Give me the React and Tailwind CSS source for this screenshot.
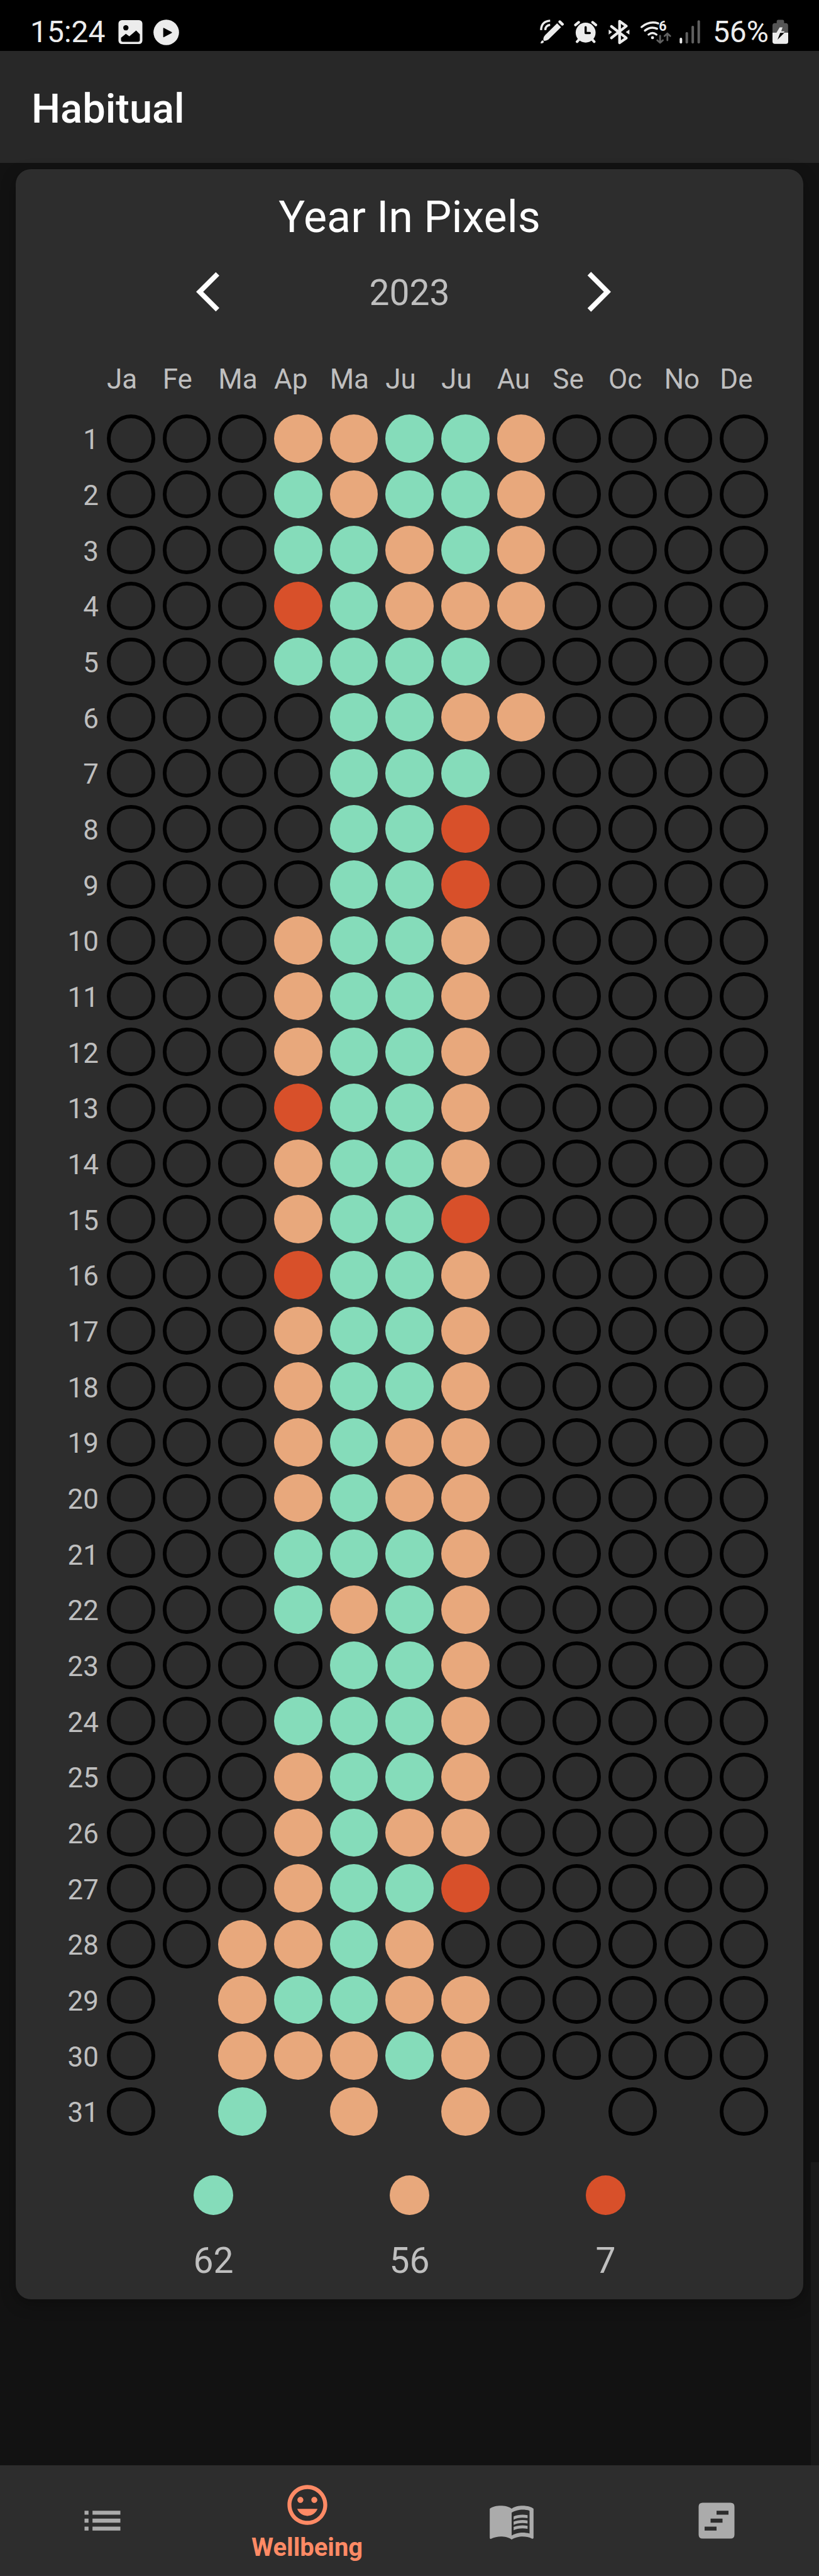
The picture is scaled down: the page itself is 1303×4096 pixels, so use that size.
import React, { useState } from "react";
import { MdMenuBook } from "react-icons/md";

const MONTHS = ["Ja", "Fe", "Ma", "Ap", "Ma", "Ju", "Ju", "Au", "Se", "Oc", "No", "De"];

// One string per day, one character per month:
// g = good, o = okay, r = rough, . = nothing logged, _ = no such date
const DAYS = [
  "...ooggo....",
  "...goggo....",
  "...ggogo....",
  "...rgooo....",
  "...gggg.....",
  "....ggoo....",
  "....ggg.....",
  "....ggr.....",
  "....ggr.....",
  "...oggo.....",
  "...oggo.....",
  "...oggo.....",
  "...rggo.....",
  "...oggo.....",
  "...oggr.....",
  "...rggo.....",
  "...oggo.....",
  "...oggo.....",
  "...ogoo.....",
  "...ogoo.....",
  "...gggo.....",
  "...gogo.....",
  "....ggo.....",
  "...gggo.....",
  "...oggo.....",
  "...ogoo.....",
  "...oggr.....",
  "..oogo......",
  "._oggoo.....",
  "._ooogo.....",
  "._g_o_o._._.",
];

const FILLS = {
  g: "bg-[#85dcba]",
  o: "bg-[#e8a87c]",
  r: "bg-[#d8502a]",
  ".": "border-6 border-black",
};

const TOTALS = [
  { mood: "g", count: 62 },
  { mood: "o", count: 56 },
  { mood: "r", count: 7 },
];

function StatusBar() {
  return (
    <div className="flex h-[81px] items-center justify-between bg-black pt-[21px] pr-[49px] pl-12 text-5xl leading-none text-[#ececec]">
      <div className="flex items-center">
        <span>15:24</span>
        <svg className="ml-5 h-10 w-[39px]" viewBox="208 34 43 44" aria-hidden="true">
          <rect x="208.5" y="35" width="42" height="42" rx="6" fill="#ececec" />
          <circle cx="221.5" cy="48.5" r="4.6" />
          <path d="M213 66l8.5-7 6.100 4.500 11.900-10.200 6.500 6.500v10q0 3.200-3.200 3.200H216.200q-3.200 0-3.200-3.200z" />
        </svg>
        <svg className="ml-[17px] size-[41px]" viewBox="0 0 45 45" aria-hidden="true">
          <circle cx="22.500" cy="22.500" r="22.300" fill="#ececec" />
          <path d="M17.200 15.500q0-1.500 1.300-.8l13.500 7.200q1.200.8 0 1.600l-13.500 7.200q-1.300.7-1.300-.8z" />
        </svg>
      </div>
      <div className="flex items-center">
        <svg className="h-10 w-[38px]" viewBox="950 34 42 44" aria-hidden="true">
          <path d="M956.200 71q-1-5.500 3.300-10l20.700-20.500 6.900 6.900-21.500 21q-4.500 4-9.400 2.600z" fill="#ececec" />
          <path d="M985 37.800l4.500 4.400" stroke="#ececec" strokeWidth="5" strokeLinecap="round" />
          <path d="M951.300 75.800q-.3-3.300 3.300-5.500l2.700 2.700q-2.200 3.300-6 2.800z" fill="#ececec" />
          <path d="M952 52.500q.5-15.500 16-16.500M959.300 52.500q.5-8.500 8.700-9.300" stroke="#ececec" strokeWidth="3.800" fill="none" />
        </svg>
        <svg className="ml-4 h-10 w-[38px]" viewBox="1010 34 42 44" aria-hidden="true">
          <g stroke="#ececec" strokeWidth="4.600" strokeLinecap="round">
            <path d="M1012.800 43.500l5.700-4.800M1048.600 43.500l-5.700-4.800M1020 68l-4.400 4.900M1041.400 68l4.400 4.900" />
          </g>
          <circle cx="1030.700" cy="57" r="17.500" fill="#ececec" />
          <path d="M1030.700 47.500v10.200h7.300" stroke="#000" strokeWidth="3.800" fill="none" strokeLinecap="round" strokeLinejoin="round" />
        </svg>
        <svg className="ml-[17px] h-10 w-[34px]" viewBox="1071 34 38 44" aria-hidden="true">
          <path d="M1076.300 46l26.500 20.500-12 8.500V36.800l12 8.500-26.500 21" stroke="#ececec" strokeWidth="4.800" fill="none" strokeLinecap="round" strokeLinejoin="round" />
          <path d="M1071.500 51.500l6 4.500-6 4.500zM1108.300 51.500l-6.500 4.500 6.500 4.500z" fill="#ececec" />
        </svg>
        <svg className="ml-4 h-[50px] w-[51px]" viewBox="1127 28 56 56" aria-hidden="true">
          <circle cx="1149" cy="66" r="2.700" fill="#ececec" />
          <g stroke="#ececec" strokeWidth="3.800" fill="none" strokeLinecap="round">
            <path d="M1142 60.500q7-5.500 14 0" />
            <path d="M1135.500 53.300q10.500-8.300 21.500-3.300" />
            <path d="M1129.500 47q14-11.500 29.500-6.500" />
          </g>
          <text x="1160.300" y="54" fontSize="24" fontWeight="700" fill="#ececec">6</text>
          <g stroke="#606060" strokeWidth="3.200" fill="none" strokeLinecap="round" strokeLinejoin="round">
            <path d="M1162.500 62.500v12M1157.500 70.500l5 4.500 5-4.500" />
            <path d="M1175.500 70.500v-12M1170.500 63l5-4.500 5 4.500" />
          </g>
        </svg>
        <svg className="ml-3 h-10 w-[33px]" viewBox="1195 34 36 44" aria-hidden="true">
          <rect x="1195.200" y="66" width="4.400" height="10" rx="2" fill="#ececec" />
          <g fill="#606060">
            <rect x="1205.500" y="56" width="4.400" height="20" rx="2" />
            <rect x="1215.900" y="45" width="4.400" height="31" rx="2" />
            <rect x="1226.400" y="35.500" width="4.400" height="40.500" rx="2" />
          </g>
        </svg>
        <span className="ml-5">56%</span>
        <svg className="ml-1.5 h-10 w-[25px]" viewBox="1358 34 28 44" aria-hidden="true">
          <path d="M1365.500 40v-3q0-2.800 2.800-2.800h7.600q2.800 0 2.800 2.800v3h2.800q4.300 0 4.300 4.300V57H1358V44.300q0-4.300 4.300-4.300z" fill="#555" />
          <path d="M1358 57h28v15.700q0 4.300-4.300 4.300h-19.400q-4.300 0-4.300-4.300z" fill="#ececec" />
          <path d="M1370.800 47.500h5.200l-2.500 7h6.200l-2.300 2.800h-12.500z" fill="#ececec" />
          <path d="M1364.500 57.300h7.200l-4.700 12 12-12z" />
        </svg>
      </div>
    </div>
  );
}

function YearCard() {
  const [year, setYear] = useState(2023);
  return (
    <section className="mx-[25px] mt-2.5 rounded-3xl bg-[#2d2d2d] pt-9 pb-[29px] text-[#bfbfbf] shadow-[0_8px_24px_rgba(0,0,0,0.3)]">
      <h2 className="text-center text-[70px] leading-[80px] text-white">Year In Pixels</h2>

      <div className="mx-auto mt-[41px] flex h-[76px] max-w-[680px] items-center justify-between">
        <button type="button" aria-label="Previous year" onClick={() => setYear(year - 1)} className="text-white">
          <svg className="size-[76px]" viewBox="0 0 24 24" fill="currentColor">
            <path d="M11.670 3.870 9.900 2.100 0 12l9.900 9.900 1.770-1.770L3.540 12z" />
          </svg>
        </button>
        <span className="pt-1 text-[57px] leading-[64px]">{year}</span>
        <button type="button" aria-label="Next year" onClick={() => setYear(year + 1)} className="text-white">
          <svg className="size-[76px]" viewBox="0 0 24 24" fill="currentColor">
            <path d="M6.230 20.230 8 22l10-10L8 2 6.230 3.770 14.460 12z" />
          </svg>
        </button>
      </div>

      <table className="mt-[75px] block pr-[50px] text-[44px] leading-[52px]">
        <thead className="block">
          <tr className="mb-6 grid grid-cols-[139px_repeat(12,minmax(0,1fr))]">
            <td />
            {MONTHS.map((m, i) => (
              <th key={i} scope="col" className="pl-1.5 text-left font-normal">
                {m}
              </th>
            ))}
          </tr>
        </thead>
        <tbody className="block">
          {DAYS.map((row, d) => (
            <tr key={d} className="grid grid-cols-[139px_repeat(12,minmax(0,1fr))] items-center">
              <th scope="row" className="pt-1 pr-[7px] text-right font-normal">
                {d + 1}
              </th>
              {row.split("").map((c, m) => (
                <td key={m} className="aspect-square p-1.5">
                  {c !== "_" && <div className={`size-full rounded-full ${FILLS[c]}`} />}
                </td>
              ))}
            </tr>
          ))}
        </tbody>
      </table>

      <ul className="mx-auto mt-[57px] grid max-w-[936px] grid-cols-3">
        {TOTALS.map((t) => (
          <li key={t.mood} className="flex flex-col items-center gap-[41px]">
            <div className={`size-[63px] rounded-full ${FILLS[t.mood]}`} />
            <span className="text-[57px] leading-[64px]">{t.count}</span>
          </li>
        ))}
      </ul>
    </section>
  );
}

function BottomNav() {
  return (
    <nav className="grid h-[176px] grid-cols-4 border-b border-[#352f35] bg-[#2d2d2d] text-[#ababab]">
      <a href="#habits" aria-label="Habits" className="flex items-center justify-center">
        <svg className="size-[76px]" viewBox="0 0 24 24" fill="currentColor">
          <path d="M3 13h2v-2H3v2zm0 4h2v-2H3v2zm0-8h2V7H3v2zm4 4h14v-2H7v2zm0 4h14v-2H7v2zM7 7v2h14V7H7z" />
        </svg>
      </a>
      <a href="#wellbeing" aria-current="page" className="flex flex-col items-center pt-[25px] text-[#ff8a65]">
        <svg className="size-[76px]" viewBox="0 0 24 24" fill="currentColor">
          <path d="M11.990 2C6.470 2 2 6.480 2 12s4.470 10 9.990 10C17.520 22 22 17.520 22 12S17.520 2 11.990 2zM12 20c-4.420 0-8-3.580-8-8s3.580-8 8-8 8 3.580 8 8-3.580 8-8 8zm3.500-9c.830 0 1.500-.670 1.500-1.500S16.330 8 15.500 8 14 8.670 14 9.500s.670 1.500 1.500 1.500zm-7 0c.830 0 1.500-.670 1.500-1.500S9.330 8 8.500 8 7 8.670 7 9.500 7.670 11 8.500 11zm3.500 6.500c2.330 0 4.310-1.460 5.110-3.500H6.890c.800 2.040 2.780 3.500 5.110 3.500z" />
        </svg>
        <span className="mt-1.5 text-[40px] leading-[48px] font-bold">Wellbeing</span>
      </a>
      <a href="#journal" aria-label="Journal" className="flex items-center justify-center">
        <MdMenuBook className="size-[76px]" />
      </a>
      <a href="#timeline" aria-label="Timeline" className="flex items-center justify-center">
        <svg className="size-[76px]" viewBox="0 0 24 24" fill="currentColor">
          <path fillRule="evenodd" d="M5 3h14q2 0 2 2v14q0 2-2 2H5q-2 0-2-2V5q0-2 2-2zm7 4v2h6V7zm-3 4v2h6v-2zm-3 4v2h6v-2z" />
        </svg>
      </a>
    </nav>
  );
}

export default function App() {
  return (
    <div className="flex min-h-screen flex-col bg-[#121212] font-[Roboto,sans-serif]">
      <StatusBar />
      <header className="flex h-[178px] items-center bg-[#282828] pt-1.5 pl-[50px]">
        <h1 className="text-[65px] leading-[72px] font-medium text-white">Habitual</h1>
      </header>
      <main className="relative flex-1">
        <YearCard />
        <div className="absolute right-0 bottom-0 h-[482px] w-[13px] bg-[#1a1a1a]" />
      </main>
      <BottomNav />
    </div>
  );
}
